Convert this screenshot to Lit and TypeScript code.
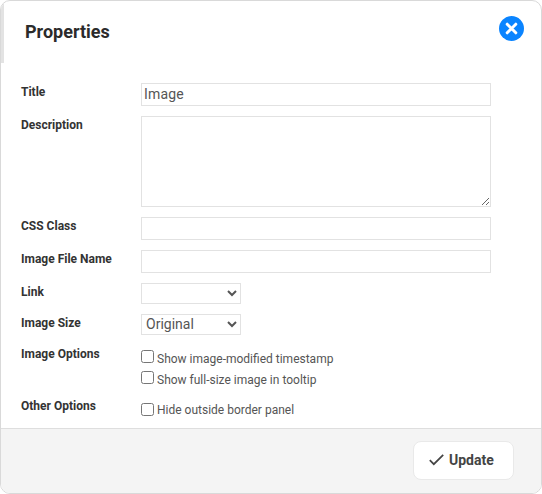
import { LitElement, html, css } from "lit";
import { customElement } from "lit/decorators.js";

@customElement("app-root")
export class AppRoot extends LitElement {
  static styles = css`
    :host { display: block; width: 542px; height: 494px; font-family: Roboto, "Liberation Sans", sans-serif; background: #fff; }
    * { box-sizing: border-box; }
    .modal { position: relative; width: 542px; height: 494px; border: 1px solid #d9d9d9; border-radius: 10px; background: #fff; overflow: hidden; display: flex; flex-direction: column; }
    .head { height: 62px; border-left: 3px solid #e3e3e3; padding: 17px 0 0 21px; display: flex; justify-content: space-between; align-items: flex-start; margin-bottom: 20px; flex: none; }
    h1 { margin: 0; font-size: 18px; line-height: 27px; font-weight: 700; color: #2b2b2b; }
    .close { width: 25px; height: 25px; border: 0; padding: 0; background: none; margin: -2px 17px 0 0; display: block; }
    .close svg { display: block; }
    .form { flex: 1; padding: 0 0 0 20px; display: flex; flex-direction: column; gap: 10px; }
    .row { display: grid; grid-template-columns: 120px 350px; align-items: start; }
    label.name { font-size: 12px; font-weight: 700; color: #333; line-height: 16px; padding-top: 1px; }
    input.text, textarea { width: 350px; border: 1px solid #e2e2e2; background: #fff; font: 14px Roboto, sans-serif; color: #555; padding: 0 2px; outline: none; border-radius: 0; display: block; }
    input.text { height: 23px; letter-spacing: 0.2px; padding-bottom: 1px; }
    textarea { height: 91px; }
    select { height: 21px; width: 100px; border: 1px solid #e2e2e2; background: #fff; font: 14px Roboto, sans-serif; color: #555; padding: 0 0 2px; border-radius: 0; outline: none; display: block; }
    .checks { display: flex; flex-direction: column; gap: 5px; padding-top: 5px; }
    .checks.other { padding-top: 6px; }
    .check { display: flex; align-items: flex-start; font-size: 12px; line-height: 15px; color: #555; }
    .check input { width: 13px; height: 13px; margin: 0 3px 0 0; flex: none; }
    .check span { margin: 2px 0 -1px; }
    .checks.other .check span { margin: 0; }
    .foot { flex: none; height: 65px; background: #f4f4f4; border-top: 1px solid #dedede; display: flex; justify-content: flex-end; align-items: flex-start; padding: 12px 27px 0 0; }
    .update { width: 101px; height: 39px; background: #fff; border: 1px solid #e9e9e9; border-radius: 8px; display: flex; align-items: center; justify-content: flex-start; gap: 5px; font: 700 14px Roboto, sans-serif; color: #444; padding: 0 0 1px 15px; }
  `;
  render() {
    return html`<div class="modal">
      <div class="head">
        <h1>Properties</h1>
        <button class="close" aria-label="Close">
          <svg width="25" height="25" viewBox="0 0 25 25"><circle cx="12.5" cy="12.5" r="12.5" fill="#0a84ff"/><path d="M8.2 8.2l8.6 8.6M16.8 8.2l-8.6 8.6" stroke="#fff" stroke-width="3" stroke-linecap="round"/></svg>
        </button>
      </div>
      <div class="form">
        <div class="row"><label class="name">Title</label><input class="text" value="Image" /></div>
        <div class="row"><label class="name">Description</label><textarea></textarea></div>
        <div class="row"><label class="name">CSS Class</label><input class="text" /></div>
        <div class="row"><label class="name">Image File Name</label><input class="text" /></div>
        <div class="row"><label class="name">Link</label><select><option></option></select></div>
        <div class="row"><label class="name">Image Size</label><select><option>Original</option></select></div>
        <div class="row"><label class="name">Image Options</label><div class="checks">
          <label class="check"><input type="checkbox" /><span>Show image-modified timestamp</span></label>
          <label class="check"><input type="checkbox" /><span>Show full-size image in tooltip</span></label>
        </div></div>
        <div class="row"><label class="name">Other Options</label><div class="checks other">
          <label class="check"><input type="checkbox" /><span>Hide outside border panel</span></label>
        </div></div>
      </div>
      <div class="foot">
        <button class="update">
          <svg width="15" height="12" viewBox="0 0 15 12"><path d="M0.8 6.2l4 4L14.2 0.8" fill="none" stroke="#444" stroke-width="1.7"/></svg>
          Update
        </button>
      </div>
    </div>`;
  }
}
